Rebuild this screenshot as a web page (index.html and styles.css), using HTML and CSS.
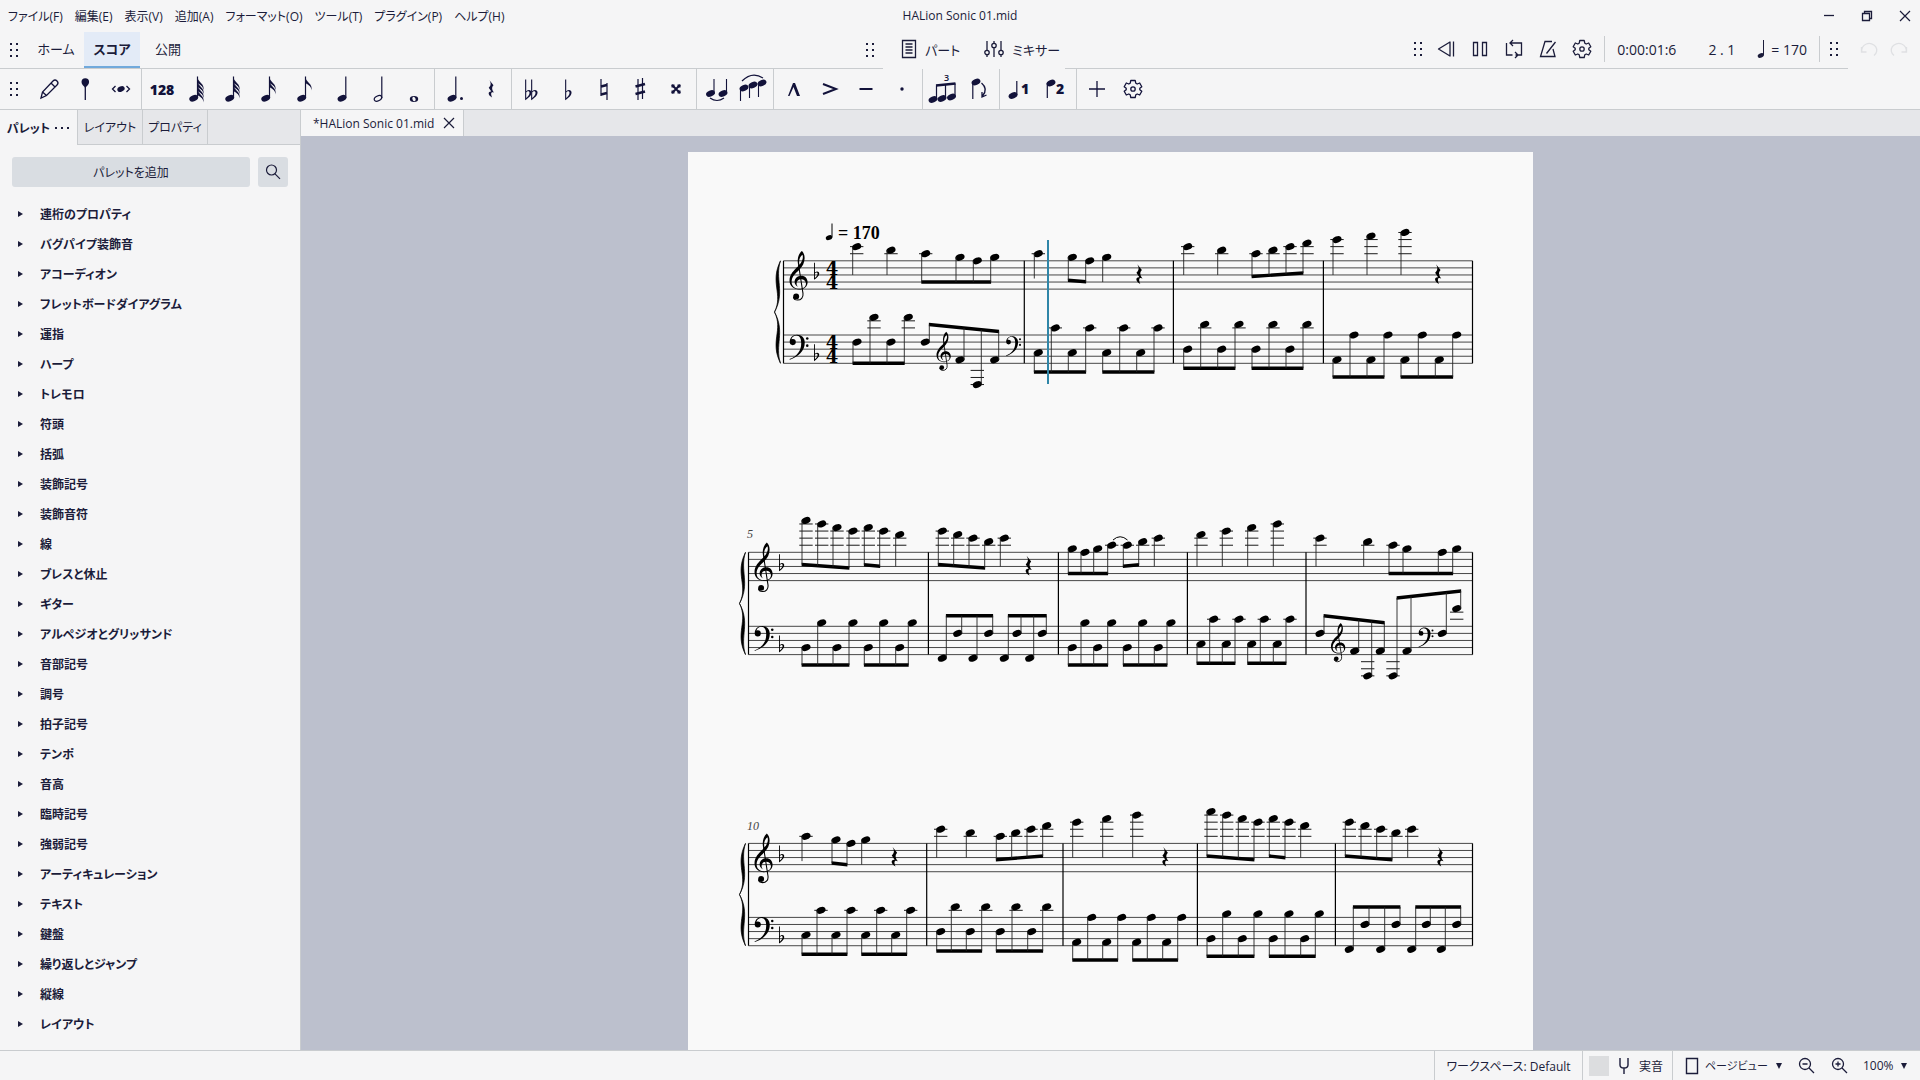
FILE: index.html
```html
<!DOCTYPE html>
<html lang="ja">
<head>
    <meta charset="UTF-8">
    <meta name="viewport" content="width=device-width, initial-scale=1.0">

    <title>HALion Sonic 01.mid</title>

    <link rel="stylesheet" href="styles.css">

</head>

<body>

    <!-- shared icon shapes -->
    <svg class="defs" aria-hidden="true">
        <symbol id="grip" viewBox="0 0 12 16">
            <path d="M2 1h2v2H2zM8 1h2v2H8zM2 7h2v2H2zM8 7h2v2H8zM2 13h2v2H2zM8 13h2v2H8z" fill="currentColor"/>
        </symbol>
        <symbol id="gear" viewBox="0 0 20 20">
            <path d="M7.800 1.500 L12.200 1.500 L12.800 4.200 L14.200 5 L16.700 4 L18.800 7.700 L16.800 9.300 L16.800 10.700 L18.800 12.300 L16.700 16 L14.200 15 L12.800 15.800 L12.200 18.500 L7.800 18.500 L7.200 15.800 L5.800 15 L3.300 16 L1.200 12.300 L3.200 10.700 L3.200 9.300 L1.200 7.700 L3.300 4 L5.800 5 L7.200 4.200 Z" fill="none" stroke="currentColor" stroke-width="1.3" stroke-linejoin="round"/>
            <circle cx="10" cy="10" r="2.200" fill="none" stroke="currentColor" stroke-width="1.300"/>
        </symbol>
        <symbol id="rest" viewBox="-8 -16 16 32" overflow="visible">
            <path d="M-2.400 -14L4 -6C1 -2.500 1 .5 5 6C1 4 -1.500 6 1.800 13.500C-5 10 -5.500 3.500 .5 4L-3.600 -2C.5 -6 0 -9.500 -2.400 -14Z" fill="currentColor"/>
        </symbol>
        <symbol id="down" viewBox="0 0 8 8">
            <path d="M1 1h6L4 7z" fill="currentColor"/>
        </symbol>
        <symbol id="treble" viewBox="0 -44 26 70" overflow="visible">
            <path fill="currentColor" fill-rule="evenodd" d="M17.300 -43.700C12.500 -39.500 10.600 -32 12 -25L12.600 -22.500C6 -16.500 0 -10.500 0 -2C0 6 6 10.600 13.500 10.600C20.500 10.600 25.500 6 25.500 .2C25.500 -5.200 21.800 -9 16.800 -9C11 -9 7.200 -5 7.200 -.4C7.200 3 9 5.400 12.300 7C10.600 5.200 10 3.800 10 2C10 -1.600 12.500 -4 16.200 -4C20.400 -4 23.200 -1.200 23.200 2.400C23.200 6.800 19 9.500 14 9.500C7.400 9.500 3 5.600 3 -.2C3 -7 7.500 -11.500 13.500 -17C18.500 -22 21.300 -27.500 21.300 -34C21.300 -38.500 19.500 -42 17.300 -43.700ZM18.300 -38.500C20 -33.500 17.500 -28 14 -24.500C12.600 -30 14.500 -36 18.300 -38.500Z"/>
            <path fill="none" stroke="currentColor" stroke-width="1.500" d="M12.800 -24L19 16C19.800 22 16 25.300 11.500 25.300C8 25.300 5.700 23.500 5.600 21"/>
            <circle cx="9.400" cy="20.200" r="4.200" fill="currentColor"/>
        </symbol>
        <symbol id="bass" viewBox="0 -11 27 36" overflow="visible">
            <path fill="currentColor" d="M.5 24.800C12 20.500 21.500 13 21.500 .5C21.500 -6.200 17 -10.400 10.500 -10.400C4.500 -10.400 .3 -6 .3 0A4.300 4.300 0 1 0 4.600 -4.300Q3.400 -4.300 2.600 -4C4 -7.600 6.500 -9.300 9.500 -9.300C14 -9.300 16.500 -5.500 16.500 1.500C16.500 12 11 19.500 0 24Z"/>
            <circle cx="25" cy="-5" r="1.800" fill="currentColor"/>
            <circle cx="25" cy="5" r="1.800" fill="currentColor"/>
        </symbol>
        <symbol id="flat" viewBox="0 -18 8 26" overflow="visible">
            <path fill="currentColor" fill-rule="evenodd" d="M0 -17.500H1.300V-3.500C4 -6.200 7.600 -5.200 7.600 -2C7.600 1.500 4 4.500 0 7.200ZM1.300 -2V4.500C3.600 2.500 5.200 .5 5.200 -1.800C5.200 -4.300 2.600 -4.200 1.300 -2Z"/>
        </symbol>
    </svg>

    <header class="titlebar">
        <nav class="menu">
            <button>ファイル(F)</button>
            <button>編集(E)</button>
            <button>表示(V)</button>
            <button>追加(A)</button>
            <button>フォーマット(O)</button>
            <button>ツール(T)</button>
            <button>プラグイン(P)</button>
            <button>ヘルプ(H)</button>
        </nav>
        <span class="title">HALion Sonic 01.mid</span>
        <div class="window-buttons">
            <button aria-label="最小化"><svg width="12" height="12" viewBox="0 0 12 12"><path d="M1 5.500h10" stroke="currentColor" stroke-width="1.300"/></svg></button>
            <button aria-label="元に戻す"><svg width="12" height="12" viewBox="0 0 12 12"><path d="M1.500 3.500h7v7h-7zM3.500 3.500v-2h7v7h-2" fill="none" stroke="currentColor" stroke-width="1.300"/></svg></button>
            <button aria-label="閉じる"><svg width="12" height="12" viewBox="0 0 12 12"><path d="M1 1l10 10M11 1L1 11" stroke="currentColor" stroke-width="1.200"/></svg></button>
        </div>
    </header>

    <div class="mainbar">
        <div class="mainbar-left">
            <svg class="grip"><use href="#grip"/></svg>
            <nav class="modes">
                <button>ホーム</button>
                <button class="active">スコア</button>
                <button>公開</button>
            </nav>
            <svg class="grip grip-end"><use href="#grip"/></svg>
        </div>

        <div class="mainbar-center">
            <button>
                <svg width="16" height="20" viewBox="0 0 16 20"><path d="M1.500 1.500h13v17h-13zM4.500 5h7M4.500 8h7M4.500 11h7M4.500 14h7" fill="none" stroke="currentColor" stroke-width="1.300"/></svg>
                パート
            </button>
            <button>
                <svg width="20" height="18" viewBox="0 0 20 18"><g fill="none" stroke="currentColor" stroke-width="1.300"><path d="M3 1v9M3 15v2M10 1v2M10 8v9M17 1v9M17 15v2"/><circle cx="3" cy="12.500" r="2.200"/><circle cx="10" cy="5.500" r="2.200"/><circle cx="17" cy="12.500" r="2.200"/></g></svg>
                ミキサー
            </button>
        </div>

        <div class="mainbar-right">
            <svg class="grip grip-transport"><use href="#grip"/></svg>
            <button aria-label="先頭へ"><svg width="20" height="18" viewBox="0 0 20 18"><path d="M14 2v14L2.500 9zM17.500 1.500v15" fill="none" stroke="currentColor" stroke-width="1.300" stroke-linejoin="round"/></svg></button>
            <button aria-label="一時停止"><svg width="20" height="18" viewBox="0 0 20 18"><path d="M3.500 2.500h4v13h-4zM12.500 2.500h4v13h-4z" fill="none" stroke="currentColor" stroke-width="1.300"/></svg></button>
            <button aria-label="ループ"><svg width="20" height="20" viewBox="0 0 20 20"><path d="M2.500 4v12h6M6 4h11.500v12h-6M9 1L6 4l3 3M11 13l3 3l-3 3" fill="none" stroke="currentColor" stroke-width="1.300"/></svg></button>
            <button aria-label="メトロノーム"><svg width="20" height="20" viewBox="0 0 20 20"><path d="M14 2.500H7L2.500 17.500h14.500L15 10M8.500 14.500L17.500 3" fill="none" stroke="currentColor" stroke-width="1.300"/></svg></button>
            <button aria-label="再生設定"><svg width="20" height="20"><use href="#gear"/></svg></button>
            <span class="readout">
                <span class="time">0:00:01:6</span>
                <span class="beat">2 . 1</span>
                <svg width="8" height="20" viewBox="0 0 8 20"><path d="M6.500 1v15" stroke="currentColor"/><ellipse cx="3.800" cy="16.500" rx="3.200" ry="2.200" transform="rotate(-22 3.800 16.500)" fill="currentColor"/></svg>
                <span>= 170</span>
            </span>
            <svg class="grip"><use href="#grip"/></svg>
        </div>

        <div class="history">
            <button aria-label="元に戻す" disabled><svg width="18" height="18" viewBox="0 0 18 18"><path d="M1.500 6v5h5M2 11A7.500 6.800 0 1 1 14 14.500" fill="none" stroke="currentColor" stroke-width="1.300"/></svg></button>
            <button aria-label="やり直す" disabled><svg width="18" height="18" viewBox="0 0 18 18"><path d="M16.500 6v5h-5M16 11A7.500 6.800 0 1 0 4 14.500" fill="none" stroke="currentColor" stroke-width="1.300"/></svg></button>
        </div>
    </div>

    <!-- filled in by script.js -->
    <div class="notebar" id="notebar"></div>

    <div class="workspace">
        <aside class="panel">
            <div class="panel-tabs">
                <button class="active">パレット <svg width="16" height="4" viewBox="0 0 16 4"><path d="M1 1h2v2H1zM7 1h2v2H7zM13 1h2v2h-2z" fill="currentColor"/></svg></button>
                <button>レイアウト</button>
                <button>プロパティ</button>
            </div>
            <div class="panel-actions">
                <button class="add">パレットを追加</button>
                <button class="search" aria-label="検索"><svg width="18" height="18" viewBox="0 0 18 18"><circle cx="7.500" cy="7" r="5" fill="none" stroke="currentColor" stroke-width="1.200"/><path d="M11 10.800l5 5" stroke="currentColor" stroke-width="1.200"/></svg></button>
            </div>
            <ul class="palettes" id="palettes"></ul>
        </aside>

        <main class="document">
            <div class="doc-tabs">
                <div class="doc-tab">
                    *HALion Sonic 01.mid
                    <button aria-label="タブを閉じる"><svg width="12" height="12" viewBox="0 0 12 12"><path d="M1 1l10 10M11 1L1 11" stroke="currentColor" stroke-width="1.200"/></svg></button>
                </div>
            </div>
            <div class="canvas">
                <svg class="sheet" id="sheet" viewBox="688 152 845 898" preserveAspectRatio="xMidYMin slice"></svg>
            </div>
        </main>
    </div>

    <footer class="statusbar">
        <button class="workspace-name">ワークスペース: Default</button>
        <button class="pitch">
            <span class="swatch"></span>
            <svg width="12" height="18" viewBox="0 0 12 18"><path d="M2 1v7q0 3 4 3t4-3V1M6 11v6" fill="none" stroke="currentColor" stroke-width="1.400"/></svg>
            実音
        </button>
        <div class="view">
            <svg width="14" height="18" viewBox="0 0 14 18"><path d="M1.500 1.500h11v15h-11z" fill="none" stroke="currentColor" stroke-width="1.400"/></svg>
            <select class="view-mode" aria-label="表示モード"><option>ページビュー</option></select>
            <svg class="arrow"><use href="#down"/></svg>
            <button aria-label="縮小"><svg width="18" height="18" viewBox="0 0 18 18"><path d="M4.500 7h5M11 11l5 5" stroke="currentColor" stroke-width="1.300"/><circle cx="7" cy="7" r="5.500" fill="none" stroke="currentColor" stroke-width="1.300"/></svg></button>
            <button aria-label="拡大"><svg width="18" height="18" viewBox="0 0 18 18"><path d="M4.500 7h5M7 4.500v5M11 11l5 5" stroke="currentColor" stroke-width="1.300"/><circle cx="7" cy="7" r="5.500" fill="none" stroke="currentColor" stroke-width="1.300"/></svg></button>
            <select class="zoom" aria-label="ズーム"><option>100%</option></select>
            <svg class="arrow"><use href="#down"/></svg>
        </div>
    </footer>

    <script src="script.js"></script>

</body>

</html>
```

FILE: styles.css
```css
* {
    box-sizing: border-box;
}

body {
    margin: 0;
    height: 100vh;
    display: flex;
    flex-direction: column;
    overflow: hidden;
    font-family: "Open Sans", "Noto Sans CJK JP", sans-serif;
    font-feature-settings: "palt";
    font-size: 12px;
    color: #1b1c3a;
    background-color: #f5f5f6;
}

button,
select {
    font: inherit;
    font-feature-settings: inherit;
    color: inherit;
    background: none;
    border: none;
    padding: 0;
    margin: 0;
    white-space: nowrap;
}

select {
    appearance: none;
}

svg {
    display: block;
    flex: none;
}

.defs {
    position: absolute;
    width: 0;
    height: 0;
}

.grip {
    width: 12px;
    height: 16px;
}

/* menu row */
.titlebar {
    display: grid;
    grid-template-columns: 1fr auto 1fr;
    align-items: center;
    height: 32px;
    padding-bottom: 1px;
    flex: none;
}

.menu {
    display: flex;
    gap: 12px;
    padding-left: 8px;
}

.window-buttons {
    display: flex;
    justify-content: flex-end;
    gap: 26px;
    padding-right: 9px;
}

/* mode tabs and transport */
.mainbar {
    display: grid;
    grid-template-columns: 46% 182px 1fr 72px;
    height: 37px;
    flex: none;
    font-size: 13px;
}

.mainbar-left,
.mainbar-right {
    display: flex;
    align-items: center;
    border-bottom: 1px solid #c9cccf;
}

.mainbar-left {
    padding-left: 8px;
}

.modes {
    display: flex;
    align-self: stretch;
    padding-left: 8px;
}

.modes button {
    width: 56px;
    padding-bottom: 2px;
    border-bottom: 2px solid transparent;
}

.modes .active {
    font-weight: 700;
    background-color: #e3ebf7;
    border-bottom-color: #70a9dc;
}

.grip-end {
    margin-left: auto;
    margin-right: 7px;
}

.mainbar-center {
    display: flex;
    align-items: center;
    gap: 24px;
    padding-left: 18px;
    padding-bottom: 3px;
}

.mainbar-center button {
    display: flex;
    align-items: center;
    gap: 8px;
}

.mainbar-right {
    justify-content: flex-end;
    gap: 14px;
    padding-right: 8px;
    padding-bottom: 2px;
    font-size: 14px;
}

.grip-transport {
    margin-right: -2px;
}

.readout {
    display: flex;
    align-items: center;
    gap: 6px;
    height: 26px;
    padding: 0 12px;
    margin-right: -6px;
    margin-left: -2px;
    border-left: 1px solid #c9cccf;
    border-right: 1px solid #c9cccf;
}

.time {
    margin-right: 26px;
}

.beat {
    margin-right: 16px;
}

.history {
    display: flex;
    align-items: center;
    justify-content: center;
    gap: 12px;
    padding-bottom: 2px;
}

.history button {
    color: #dfe0e3;
}

/* note input */
.notebar {
    display: flex;
    height: 41px;
    flex: none;
    border-bottom: 1px solid #c9cccf;
}

.note-group {
    display: flex;
    align-items: center;
    padding: 0 2px;
    border-right: 1px solid #c9cccf;
}

.note-group:last-child {
    border-right: none;
}

.note-group .grip {
    margin: 0 11px 0 6px;
}

.note-group button {
    display: flex;
    justify-content: center;
    width: 36px;
    font-size: 14px;
    font-weight: 800;
    color: #12123a;
}

.note-text {
    font-size: 14px;
    font-weight: 800;
}

.tuplet-text {
    font-size: 9px;
    font-weight: 600;
}

/* panel */
.workspace {
    display: flex;
    flex: 1;
    min-height: 0;
}

.panel {
    width: 301px;
    flex: none;
    border-right: 1px solid #c9cccf;
}

.panel-tabs {
    display: flex;
    height: 35px;
    background-color: #e6e7ea;
}

.panel-tabs::after {
    content: "";
    flex: 1;
    border-bottom: 1px solid #c9cccf;
}

.panel-tabs button {
    width: 65px;
    border-right: 1px solid #c9cccf;
    border-bottom: 1px solid #c9cccf;
}

.panel-tabs .active {
    display: flex;
    align-items: center;
    justify-content: center;
    gap: 4px;
    width: 78px;
    font-weight: 700;
    background-color: #f5f5f6;
    border-bottom: none;
}

.panel-actions {
    display: flex;
    gap: 8px;
    padding: 12px;
}

.panel-actions button {
    height: 30px;
    border-radius: 3px;
    background-color: #d9dde2;
}

.panel-actions .add {
    flex: 1;
}

.panel-actions .search {
    display: flex;
    align-items: center;
    justify-content: center;
    width: 30px;
}

.palettes {
    list-style: none;
    margin: 0;
    padding: 0;
}

.palettes button {
    display: flex;
    align-items: center;
    gap: 17px;
    width: 100%;
    height: 30px;
    padding-left: 18px;
    font-weight: 700;
}

/* score */
.document {
    display: flex;
    flex-direction: column;
    flex: 1;
    min-width: 0;
}

.doc-tabs {
    display: flex;
    height: 26px;
    flex: none;
    background-color: #e6e7ea;
}

.doc-tab {
    display: flex;
    align-items: center;
    gap: 9px;
    padding: 0 8px 0 12px;
    background-color: #f5f5f6;
    border-right: 1px solid #c9cccf;
}

.canvas {
    display: flex;
    justify-content: center;
    flex: 1;
    min-height: 0;
    padding-top: 16px;
    background-color: #bcc0cd;
}

.sheet {
    width: 845px;
    height: 100%;
    background-color: #f9f9f9;
    color: #000000;
}

.tempo {
    font-family: "Liberation Serif", serif;
    font-size: 18px;
    font-weight: 700;
}

.measure-number {
    font-family: "Liberation Serif", serif;
    font-size: 12px;
    font-style: italic;
    fill: #444444;
}

.time-signature {
    font-family: "DejaVu Serif", serif;
    font-size: 18px;
    font-weight: 700;
    text-anchor: middle;
}

.playhead {
    stroke: #2f86a8;
    stroke-width: 2;
}

/* status bar */
.statusbar {
    display: flex;
    justify-content: flex-end;
    height: 30px;
    flex: none;
    border-top: 1px solid #c9cccf;
}

.workspace-name,
.pitch,
.view {
    border-left: 1px solid #c9cccf;
}

.workspace-name {
    width: 148px;
}

.pitch {
    display: flex;
    align-items: center;
    gap: 9px;
    width: 90px;
    padding-left: 6px;
}

.swatch {
    width: 20px;
    height: 20px;
    background-color: #dcdddf;
}

.view {
    display: flex;
    align-items: center;
    gap: 6px;
    width: 248px;
    padding-left: 12px;
}

.view-mode {
    font-size: 11px;
}

.view button {
    margin-left: 9px;
}

.zoom {
    margin-left: 8px;
}

.arrow {
    width: 8px;
    height: 8px;
}
```

FILE: script.js
```js
// ---------- palettes ----------
const palettes = [
    '連桁のプロパティ', 'バグパイプ装飾音', 'アコーディオン', 'フレットボードダイアグラム', '運指',
    'ハープ', 'トレモロ', '符頭', '括弧', '装飾記号', '装飾音符', '線', 'ブレスと休止', 'ギター',
    'アルペジオとグリッサンド', '音部記号', '調号', '拍子記号', 'テンポ', '音高', '臨時記号',
    '強弱記号', 'アーティキュレーション', 'テキスト', '鍵盤', '繰り返しとジャンプ', '縦線', 'レイアウト'
];

document.getElementById('palettes').innerHTML = palettes.map(name =>
    `<li><button><svg width="5" height="8" viewBox="0 0 5 8"><path d="M0 1v6l5-3z" fill="currentColor"/></svg>${name}</button></li>`
).join('');

// ---------- note input toolbar ----------
const line = (d, w = 1.3) => `<path d="${d}" fill="none" stroke="currentColor" stroke-width="${w}"/>`;
const head = (x, y) => `<ellipse cx="${x}" cy="${y}" rx="4.6" ry="3" transform="rotate(-22 ${x} ${y})" fill="currentColor"/>`;

function flags(count) {
    let out = head(11.7, 25.3) + line('M15.5 3.5V25', 1.2);
    for (let i = 0; i < count; i++) {
        const y = 3.5 + i * 4;
        out += `<path d="M15 ${y}C16 ${y + 6} 23 ${y + 7} 21.500 ${y + 14}C21.500 ${y + 9} 17 ${y + 8} 15 ${y + 6}Z" fill="currentColor"/>`;
    }
    return out;
}

const flat = x => `<use href="#flat" x="${x}" y="6" width="7" height="22"/>`;

const icons = {
    pencil: line('M8 25l1.500-6L20 8q2-2 4 0t0 4L13.500 22.500zM18 10l4 4M9.500 19l4 3.500'),
    pin: '<path d="M12.500 9a3.800 3.800 0 0 1 7.600 0c0 2.500-2.300 4-3.800 6c-1.500-2-3.800-3.500-3.800-6z" fill="currentColor"/>' + line('M16.3 14v13'),
    repitch: '<ellipse cx="16" cy="16" rx="3.800" ry="2.600" transform="rotate(-22 16 16)" fill="currentColor"/>' + line('M10.500 13L7.500 16l3 3M21.500 13l3 3l-3 3'),
    n64: flags(4),
    n32: flags(3),
    n16: flags(2),
    n8: flags(1),
    n4: head(16, 25.3) + line('M19.8 3.5V25', 1.2),
    n2: '<ellipse cx="16" cy="25.300" rx="4" ry="2.400" transform="rotate(-28 16 25.300)" fill="none" stroke="currentColor" stroke-width="1.200"/>' + line('M19.8 3.5V25', 1.2),
    n1: '<ellipse cx="16" cy="26" rx="4.200" ry="3" fill="currentColor"/><ellipse cx="16" cy="26" rx="1.500" ry="2.300" transform="rotate(-25 16 26)" fill="#f5f5f6"/>',
    dot: head(13, 25.3) + line('M16.8 3.5V25', 1.2) + '<circle cx="22.500" cy="25.500" r="1.500" fill="currentColor"/>',
    rest: '<use href="#rest" x="11" y="5" width="10" height="22"/>',
    dflat: flat(9) + flat(15),
    flat: flat(13),
    natural: line('M13 6v17M19 10v17', 1.2) + line('M13 13.500l6-1.500M13 21.500l6-1.500', 2.4),
    sharp: line('M14 6v21M18.500 5v21', 1.2) + line('M11.500 13.500l9.500-2.500M11.500 21l9.500-2.500', 2.6),
    dsharp: line('M12 12l8 8M20 12l-8 8', 2) + '<path d="M11.500 11.500h3v3h-3zM17.500 11.500h3v3h-3zM11.500 17.500h3v3h-3zM17.500 17.500h3v3h-3z" fill="currentColor"/>',
    tie: head(9.5, 20.5) + head(22, 20.5) + line('M13 6v15M25.500 6v15', 1.1) + line('M9 25q7 5 14 0', 1.2),
    slur: head(7, 15) + head(16, 12) + head(25, 10) + line('M3.500 15v13M12.500 12v13M21.500 10v14', 1.1) + line('M5 8Q15-2 26 5', 1.2),
    marcato: '<path d="M10 23L15 10h2l5 13h-3L15.500 14L11.500 23z" fill="currentColor"/>',
    accent: line('M9 11l13 5l-13 5', 2),
    tenuto: line('M9.500 16h13', 2),
    staccato: '<circle cx="16" cy="16" r="1.700" fill="currentColor"/>',
    tuplet: head(6, 26.5) + head(15, 25.5) + head(24.5, 24) + line('M9.500 12.500V26M18.500 11.500V25M28 10.500V24', 1.2) + line('M9 12.500l19.500-2', 2.4) + '<text class="tuplet-text" x="17" y="8" fill="currentColor">3</text>',
    flip: head(13, 9) + line('M9.800 9v17', 1.2) + line('M18.500 10q7 6 1 13M23.500 22l-4.500 2v-5', 1.3),
    voice1: head(9, 22.5) + line('M12.800 8v14', 1.2) + '<text class="note-text" x="17" y="21" fill="currentColor">1</text>',
    voice2: head(11, 10) + line('M7.300 10v15', 1.2) + '<text class="note-text" x="16" y="21" fill="currentColor">2</text>',
    plus: line('M16 8v16M8 16h16'),
    settings: '<use href="#gear" x="6" y="6" width="20" height="20"/>'
};

const noteGroups = [
    ['grip', 'pencil', 'pin', 'repitch'],
    ['128', 'n64', 'n32', 'n16', 'n8', 'n4', 'n2', 'n1'],
    ['dot', 'rest'],
    ['dflat', 'flat', 'natural', 'sharp', 'dsharp'],
    ['tie', 'slur'],
    ['marcato', 'accent', 'tenuto', 'staccato'],
    ['tuplet', 'flip'],
    ['voice1', 'voice2'],
    ['plus', 'settings']
];

document.getElementById('notebar').innerHTML = noteGroups.map(group =>
    '<div class="note-group">' + group.map(name => {
        if (name === 'grip') return '<svg class="grip"><use href="#grip"/></svg>';
        if (name === '128') return '<button>128</button>';
        return `<button aria-label="${name}"><svg width="32" height="32" viewBox="0 0 32 32" overflow="visible">${icons[name]}</svg></button>`;
    }).join('') + '</div>'
).join('');

// ---------- score ----------
// steps are half staff spaces counted down from the top line
const STEP = 3.54;
const STEM = 'stroke="#222" stroke-width="0.9"';

function note(top, x, p) {
    const y = top + p * STEP;
    let out = `<ellipse cx="${x}" cy="${y}" rx="4.700" ry="3.200" transform="rotate(-22 ${x} ${y})"/>`;
    for (let l = -2; l >= p; l -= 2) out += ledger(top, x, l);
    for (let l = 10; l <= p; l += 2) out += ledger(top, x, l);
    return out;
}

function ledger(top, x, p) {
    const y = top + p * STEP;
    return `<path d="M${x - 6.700} ${y}h13.400" stroke="#000" stroke-width="0.9"/>`;
}

// single quarter notes with stems down, [x, step]
function quarters(top, list) {
    return list.map(([x, p]) => {
        const end = top + Math.max(4, p + 7) * STEP;
        return note(top, x, p) + `<path d="M${x - 4} ${top + p * STEP}V${end}" ${STEM}/>`;
    }).join('');
}

// beamed group, beam runs from y0 to y1
function beam(top, xs, ps, y0, y1 = y0) {
    const up = y0 < top + ps[0] * STEP;
    const dx = up ? 4 : -4;
    const a = xs[0] + dx, b = xs[xs.length - 1] + dx;
    let out = `<path d="M${a - 0.4} ${y0 - 1.700}L${b + 0.4} ${y1 - 1.700}v3.400L${a - 0.4} ${y0 + 1.700}z"/>`;
    xs.forEach((x, i) => {
        const y = y0 + (y1 - y0) * (x + dx - a) / (b - a);
        out += note(top, x, ps[i]) + `<path d="M${x + dx} ${top + ps[i] * STEP}V${y}" ${STEM}/>`;
    });
    return out;
}

const glyph = (id, x, y, w, h) => `<use href="#${id}" x="${x}" y="${y}" width="${w}" height="${h}"/>`;
const treble = (x, top, k = 0.71) => glyph('treble', x, top + 6 * STEP - 44 * k, 26 * k, 70 * k);
const bass = (x, top, k = 0.71) => glyph('bass', x, top + 2 * STEP - 11 * k, 27 * k, 36 * k);
const rest = (x, top) => glyph('rest', x - 5.700, top + 2.1, 11.4, 22.8);

function system(left, t, b, bars) {
    const right = 1472.5, bottom = b + 8 * STEP;
    let out = '';
    for (let i = 0; i < 5; i++) {
        out += `<path d="M${left} ${t + i * 2 * STEP}H${right}M${left} ${b + i * 2 * STEP}H${right}" stroke="#333" stroke-width="0.9"/>`;
    }
    [left, ...bars, right].forEach(x => {
        out += `<path d="M${x} ${t}V${bottom}" stroke="#000" stroke-width="1.200"/>`;
    });
    const m = (t + bottom) / 2, x = left - 3;
    out += `<path d="M${x} ${t}C${x - 11} ${t + 22} ${x + 3} ${m - 18} ${x - 6} ${m}C${x + 3} ${m + 18} ${x - 11} ${bottom - 22} ${x} ${bottom}C${x - 6} ${bottom - 18} ${x + 5} ${m + 20} ${x - 6} ${m}C${x + 5} ${m - 20} ${x - 6} ${t + 18} ${x} ${t}Z" stroke="#000" stroke-width="0.7"/>`;
    out += treble(left + 6, t) + bass(left + 6, b);
    out += glyph('flat', left + 30.5, t + 4 * STEP - 12.500, 5.5, 18) + glyph('flat', left + 30.5, b + 6 * STEP - 12.500, 5.5, 18);
    return out;
}

// alternating low/high eighths in the left hand
const pair = (top, xs, low, high, y) => beam(top, xs, xs.map((x, i) => i % 2 ? high : low), y);

let score = '';

// measures 1-4
let t = 260.8, b = 335;
score += system(783.5, t, b, [1024.3, 1173.4, 1323.4]);
score += quarters(t, [[856.7, -4], [891, -3], [1038.3, -2], [1106.7, -1], [1187.7, -4], [1221.7, -3], [1337, -6], [1371, -7], [1405, -8]]);
score += beam(t, [925.7, 960, 977.3, 994.7], [-2, -1, 0, -1], 282);
score += beam(t, [1072.3, 1089.7], [-1, 0], 280.3, 281.8);
score += beam(t, [1256, 1273, 1290, 1307], [-2, -3, -4, -5], 276.5, 273);
score += rest(1139, t) + rest(1437.7, t);
score += beam(b, [857, 874, 891, 908.3], [2, -5, 2, -5], 363.3);
score += beam(b, [925.3, 960, 977.3, 994.7], [2, 7, 14, 7], 324.5, 331.5);
score += treble(936.5, b, 0.56) + bass(1006, b, 0.56);
score += pair(b, [1038.3, 1055.3, 1072.3, 1089.7], 5, -2, 372);
score += pair(b, [1106.7, 1123.7, 1140.7, 1158], 5, -2, 372);
score += pair(b, [1187.7, 1204.7, 1221.7, 1239], 4, -3, 368.3);
score += pair(b, [1256, 1273, 1290, 1307], 4, -3, 368.3);
score += pair(b, [1337, 1354, 1371, 1388], 7, 0, 377);
score += pair(b, [1405, 1422.3, 1439.3, 1456.7], 7, 0, 377);
score += [t, b].map(y => `<text class="time-signature" x="832" y="${y + 13.700}">4</text><text class="time-signature" x="832" y="${y + 28}">4</text>`).join('');
score += '<path d="M832 223.500v14" stroke="#000"/><ellipse cx="829" cy="237.700" rx="3.300" ry="2.300" transform="rotate(-22 829 237.700)"/>';
score += '<text class="tempo" x="838" y="239">= 170</text>';

// measures 5-9
t = 552.3; b = 626.3;
score += system(748.5, t, b, [928.4, 1058.4, 1187.4, 1306]);
score += quarters(t, [[899.7, -5], [1004.3, -4], [1158.3, -4], [1201, -5], [1226.3, -6], [1251.7, -7], [1277.3, -8], [1320, -4], [1367.7, -3]]);
score += beam(t, [806, 821.7, 837, 853], [-9, -8, -7, -6], 564.5, 568);
score += beam(t, [868.3, 883.7], [-7, -6], 564.7, 566.3);
score += beam(t, [942.3, 957.7, 973, 988.7], [-6, -5, -4, -3], 564.5, 568);
score += beam(t, [1072.3, 1085, 1097.7, 1111.7], [-1, 0, -1, -2], 573.5);
score += beam(t, [1127.3, 1142.7], [-2, -3], 566.3, 564.7);
score += beam(t, [1393, 1407, 1442.3, 1456.7], [-2, -1, 0, -1], 573.5);
score += '<path d="M1113 540Q1120 533.500 1127.500 540" fill="none" stroke="#000" stroke-width="1"/>';
score += rest(1028.3, t);
score += pair(b, [806, 821.7, 837, 853], 6, -1, 665);
score += pair(b, [868.3, 883.7, 899.7, 912.3], 6, -1, 665);
score += pair(b, [942.3, 957.7, 973, 988.7], 9, 2, 615.7);
score += pair(b, [1004.3, 1017, 1029.7, 1042.3], 9, 2, 615.7);
score += pair(b, [1072.3, 1085, 1097.7, 1111.7], 6, -1, 665);
score += pair(b, [1127.3, 1142.7, 1158.3, 1171], 6, -1, 665);
score += pair(b, [1201, 1213.7, 1226.3, 1239], 5, -2, 663.3);
score += pair(b, [1251.7, 1264.3, 1277.3, 1290], 5, -2, 663.3);
score += beam(b, [1320, 1354.7, 1367.7, 1380.3], [2, 7, 14, 7], 615.7, 622.7);
score += beam(b, [1393, 1407, 1442.3, 1456.7], [14, 7, 2, -5], 598, 591);
score += treble(1331, b, 0.56) + bass(1418.500, b, 0.56);
score += '<text class="measure-number" x="747" y="538">5</text>';

// measures 10-14
t = 843.4; b = 917.4;
score += system(748.5, t, b, [926.7, 1063, 1197.4, 1335.4]);
score += quarters(t, [[806, -2], [865.7, -1], [940.7, -4], [970.3, -3], [1076.7, -6], [1106.7, -7], [1136.7, -8], [1304.7, -5], [1411.7, -4]]);
score += beam(t, [836, 851], [-1, 0], 863, 864.7);
score += beam(t, [1000.3, 1015.7, 1031, 1046.7], [-2, -3, -4, -5], 859.7, 856);
score += beam(t, [1211, 1226.7, 1242.3, 1258], [-9, -8, -7, -6], 856, 859.7);
score += beam(t, [1273.3, 1289], [-7, -6], 856, 857.7);
score += beam(t, [1349.3, 1365, 1380.7, 1396], [-6, -5, -4, -3], 856, 859.7);
score += rest(894.3, t) + rest(1165, t) + rest(1440, t);
score += pair(b, [806, 821, 836, 851], 5, -2, 954.3);
score += pair(b, [865.7, 880.7, 895.7, 910.7], 5, -2, 954.3);
score += pair(b, [940.7, 955.3, 970.3, 985.7], 4, -3, 951);
score += pair(b, [1000.3, 1016, 1031.7, 1046.7], 4, -3, 951);
score += pair(b, [1076.7, 1091.7, 1106.7, 1121.7], 7, 0, 960);
score += pair(b, [1136.7, 1151.3, 1166.7, 1181.7], 7, 0, 960);
score += pair(b, [1211, 1226.7, 1242.3, 1258], 6, -1, 956.3);
score += pair(b, [1273.3, 1289, 1304.7, 1319.3], 6, -1, 956.3);
score += pair(b, [1349.3, 1365, 1380.7, 1396], 9, 2, 907);
score += pair(b, [1411.7, 1426.3, 1441.3, 1456.7], 9, 2, 907);
score += '<text class="measure-number" x="747" y="830">10</text>';

score += '<path class="playhead" d="M1048 240V384"/>';

document.getElementById('sheet').innerHTML = score;
```
